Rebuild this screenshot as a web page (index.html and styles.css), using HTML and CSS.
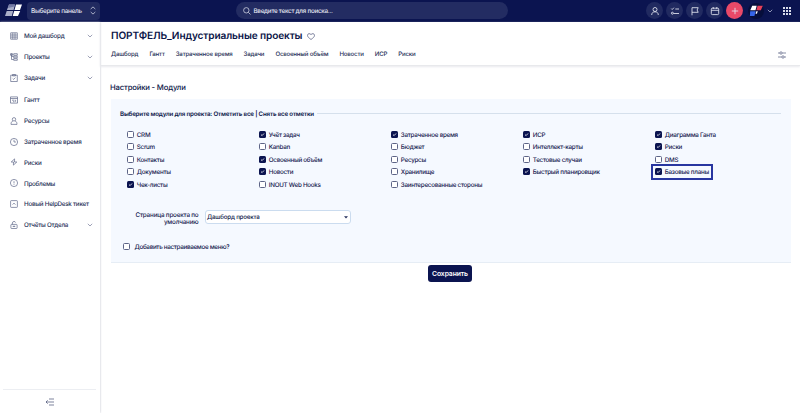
FILE: index.html
```
<!DOCTYPE html>
<html lang="ru">
<head>
<meta charset="utf-8">
<title>Настройки - Модули</title>
<link rel="stylesheet" href="styles.css">
</head>
<body>
<svg class="defs" width="0" height="0">
  <symbol id="chev" viewBox="0 0 6 4"><path d="M.8.8 3 3 5.200.8"/></symbol>
  <symbol id="tick" viewBox="0 0 7 7"><path d="M2 3.600 3.100 4.600 5 2.500"/></symbol>
</svg>
<header class="topbar">
  <svg class="logo" viewBox="0 0 18 13"><path fill="#a9aec9" d="M4 .5h6L8.600 6H1.900zM1.700 7h6.500l-1.400 5H0z"/><path fill="#fff" d="M11 .5h6L15 6H9.500zM9.200 7h6L13 12H7.700z"/><path fill="#747ba5" d="M4 .5h6L9.500 2.500 3 4z"/></svg>
  <div class="panel-pick"><span>Выберите панель</span><svg width="6" height="9" viewBox="0 0 6 9"><path d="M.7 3 3 .9 5.300 3M.7 6 3 8.100 5.300 6"/></svg></div>
  <div class="search"><svg width="8" height="8" viewBox="0 0 8 8"><circle cx="3.300" cy="3.300" r="2.700"/><path d="m5.300 5.300 2.200 2.200"/></svg><span>Введите текст для поиска...</span></div>
  <div class="actions">
    <a class="round"><svg viewBox="0 0 10 10"><circle cx="5" cy="3.500" r="2"/><path d="M1.700 9c0-2 1.200-3.200 3.300-3.200S8.300 7 8.300 9"/></svg></a>
    <a class="round"><svg viewBox="0 0 10 10"><path d="m1.300 2.600.9.9L3.900 1.700M5.300 3H9M3.500 7.500H9"/><circle cx="2.400" cy="7.200" r="1"/></svg></a>
    <a class="round"><svg viewBox="0 0 10 10"><path d="M2 9.300V1.700h6.200L7.100 4l1.100 2.300H2"/></svg></a>
    <a class="round"><svg viewBox="0 0 10 10"><rect x="1.300" y="2.200" width="7.400" height="6.400" rx="1"/><path d="M1.300 4.300h7.400M3.200 1v2M6.800 1v2"/></svg></a>
    <a class="round add"><svg viewBox="0 0 10 10"><path d="M5 1.800v6.400M1.800 5h6.400"/></svg></a>
  </div>
  <svg class="avatar" viewBox="0 0 16 16"><circle cx="8" cy="8" r="8" fill="#060e3b"/><path fill="#fff" d="M4.200 2.800h4.500L7.500 7.300H2.300z"/><path fill="#e5405a" d="M9.600 2.800h5.200L12.800 7.300H8.400z"/><path fill="#3564e8" d="M2.200 8.300h5.500L6.400 13H1.900z"/><path fill="#fff" d="M8.300 8.300h1.500l-.9 2.500H7.500z"/></svg>
  <svg class="chev light"><use href="#chev"/></svg>
  <svg class="apps" viewBox="0 0 8 8"><path d="M0 0h2v2H0zM3 0h2v2H3zM6 0h2v2H6zM0 3h2v2H0zM3 3h2v2H3zM6 3h2v2H6zM0 6h2v2H0zM3 6h2v2H3zM6 6h2v2H6z"/></svg>
</header>
<div class="body">
  <aside class="sidebar">
    <nav>
      <a><svg class="ico" viewBox="0 0 8 8"><path d="M.7.8h6.600v6.400H.7zM2.800.8v6.400M.7 3h6.600M.7 5.100h6.600M5 .8v6.400"/></svg><span>Мой дашборд</span><svg class="chev"><use href="#chev"/></svg></a>
      <a><svg class="ico" viewBox="0 0 8 8"><path d="M1.500.5v6h2M1.500 3.500h2M.5.7h2v1.600h-2zM3.700.7h3.600v1.600H3.700zM3.700 3.200h3.600v1.600H3.700zM3.700 5.700h3.600v1.600H3.700z"/></svg><span>Проекты</span><svg class="chev"><use href="#chev"/></svg></a>
      <a><svg class="ico" viewBox="0 0 8 8"><path d="M.7 1.200h6.600v6.300H.7zM2.500.5h3v1.400h-3zM2.700 4.500l1 .9L5.400 3.600"/></svg><span>Задачи</span><svg class="chev"><use href="#chev"/></svg></a>
      <a class="gap"><svg class="ico" viewBox="0 0 8 8"><path d="M.5.9h7v6.200h-7zM.5 2.500h7M2 4.200h2.500M3 5.700h1.500M5.600 3.800v2"/></svg><span>Гантт</span></a>
      <a><svg class="ico" viewBox="0 0 8 8"><circle cx="4" cy="2.300" r="1.700"/><path d="M2.900 3.900C1.500 4.500 1 5.600 1 7.400h6c0-1.800-.5-2.900-1.900-3.500"/></svg><span>Ресурсы</span></a>
      <a><svg class="ico" viewBox="0 0 8 8"><circle cx="4" cy="4" r="3.600"/><path d="M4 1.800V4h2"/></svg><span>Затраченное время</span></a>
      <a><svg class="ico" viewBox="0 0 8 8"><path d="M4.600.9 1.200 4h2.300l-.1 3.100L6.800 4H4.500z"/></svg><span>Риски</span></a>
      <a><svg class="ico" viewBox="0 0 8 8"><circle cx="4" cy="4" r="3.600"/><path d="M4 2.200v2.200M4 5.200v.7"/></svg><span>Проблемы</span></a>
      <a><svg class="ico" viewBox="0 0 8 8"><rect x=".6" y=".6" width="6.800" height="6.800" rx=".7"/><path d="m2.500 4.500 1.500-1.300 1.500 1.300"/></svg><span>Новый HelpDesk тикет</span></a>
      <a><svg class="ico" viewBox="0 0 8 8"><rect x=".9" y="3.400" width="6.200" height="4.100" rx=".6"/><path d="M2.400 3.400V2c0-2 3-2 3.200-.4M4 4.700v1.400M2.700 5.400h2.600"/></svg><span>Отчёты Отдела</span><svg class="chev"><use href="#chev"/></svg></a>
    </nav>
    <div class="collapse"><svg width="10" height="8" viewBox="0 0 10 8"><path d="M4 1h5M1 4h8M4 7h5M2.700 2.300 1 4l1.700 1.700"/></svg></div>
  </aside>
  <main>
    <div class="project">
      <h1><span>ПОРТФЕЛЬ_Индустриальные проекты</span><svg width="8" height="7" viewBox="0 0 8 7"><path d="M4 6.500C2 5 .5 3.900.5 2.300.5.500 2.900 0 4 1.600 5.100 0 7.500.500 7.500 2.300 7.500 3.900 6 5 4 6.500z"/></svg></h1>
      <div class="tabs"><a>Дашборд</a><a>Гантт</a><a>Затраченное время</a><a>Задачи</a><a>Освоенный объём</a><a>Новости</a><a>ИСР</a><a>Риски</a>
        <svg class="tune" width="8" height="8" viewBox="0 0 8 8"><path d="M0 2h1.700M4.300 2H8M0 6h3.700M6.300 6H8"/><circle cx="3" cy="2" r="1.200"/><circle cx="5" cy="6" r="1.200"/></svg></div>
    </div>
    <h2>Настройки - Модули</h2>
    <form class="card">
      <div class="legend"><span>Выберите модули для проекта: Отметить все | Снять все отметки</span></div>
      <div class="modules">
        <div class="col">
          <label><i class="cb"></i>CRM</label>
          <label><i class="cb"></i>Scrum</label>
          <label><i class="cb"></i>Контакты</label>
          <label><i class="cb"></i>Документы</label>
          <label><svg class="cb on"><use href="#tick"/></svg>Чек-листы</label>
        </div>
        <div class="col">
          <label><svg class="cb on"><use href="#tick"/></svg>Учёт задач</label>
          <label><i class="cb"></i>Kanban</label>
          <label><svg class="cb on"><use href="#tick"/></svg>Освоенный объём</label>
          <label><svg class="cb on"><use href="#tick"/></svg>Новости</label>
          <label><i class="cb"></i>INOUT Web Hooks</label>
        </div>
        <div class="col">
          <label><svg class="cb on"><use href="#tick"/></svg>Затраченное время</label>
          <label><i class="cb"></i>Бюджет</label>
          <label><i class="cb"></i>Ресурсы</label>
          <label><i class="cb"></i>Хранилище</label>
          <label><i class="cb"></i>Заинтересованные стороны</label>
        </div>
        <div class="col">
          <label><svg class="cb on"><use href="#tick"/></svg>ИСР</label>
          <label><i class="cb"></i>Интеллект-карты</label>
          <label><i class="cb"></i>Тестовые случаи</label>
          <label><svg class="cb on"><use href="#tick"/></svg>Быстрый планировщик</label>
        </div>
        <div class="col">
          <label><svg class="cb on"><use href="#tick"/></svg>Диаграмма Ганта</label>
          <label><svg class="cb on"><use href="#tick"/></svg>Риски</label>
          <label><i class="cb"></i>DMS</label>
          <label class="marked"><svg class="cb on"><use href="#tick"/></svg>Базовые планы</label>
        </div>
      </div>
      <div class="field"><div class="name">Страница проекта по умолчанию</div><div class="select"><span>Дашборд проекта</span><svg width="4" height="3" viewBox="0 0 4 3"><path d="M0 .3h4L2 2.600z"/></svg></div></div>
      <label class="custom"><i class="cb"></i>Добавить настраиваемое меню?</label>
    </form>
    <button class="save">Сохранить</button>
  </main>
</div>
</body>
</html>
```

FILE: styles.css
```
*, *::after { box-sizing: border-box; }
body { margin: 0; width: 800px; height: 413px; overflow: hidden; background: #fff; color: #15204f; font: 500 6.200px/8px Inter, "Liberation Sans", sans-serif; letter-spacing: -.18px; text-rendering: geometricPrecision; }
svg { fill: none; stroke: currentColor; stroke-width: .7; flex: none; display: block; }
.defs { position: absolute; }
h1, h2 { margin: 0; }
span, a, label { white-space: nowrap; }

.topbar { height: 22px; padding-bottom: 1px; background: #0b1450; display: flex; align-items: center; color: #e4e6f1; }
.logo { width: 18px; height: 13px; margin-left: 5px; stroke: none; }
.panel-pick { width: 73px; height: 18px; margin-left: 4px; padding: 0 4px; border-radius: 4px; background: #212a60; display: flex; align-items: center; justify-content: space-between; font-size: 6.400px; letter-spacing: -.3px; }
.search { width: 272px; height: 17px; margin-left: 136px; padding-left: 7px; border-radius: 9px; background: #232c62; display: flex; align-items: center; gap: 2.500px; font-size: 6.300px; letter-spacing: -.27px; }
.panel-pick span, .search span { padding-top: 1px; }
.actions { display: flex; gap: 3px; margin-left: 138px; }
.round { width: 17px; height: 17px; border-radius: 50%; background: #212a60; display: flex; align-items: center; justify-content: center; }
.round svg { width: 10px; height: 10px; stroke-width: .85; }
.add { background: #e94968; }
.avatar { width: 16px; height: 16px; margin-left: 5px; stroke: none; }
.chev { width: 6px; height: 4px; color: #747a98; }
.light { margin-left: 3px; color: #c9cde0; }
.apps { width: 8px; height: 8px; margin-left: 10px; fill: #d8dbea; stroke: none; }

.body { display: flex; height: 391px; }
.sidebar { width: 100px; display: flex; flex-direction: column; justify-content: space-between; box-shadow: 0 0 2px #b9bcc8; }
nav { padding: 3.600px 7px 0 10px; }
nav a { height: 20.800px; display: flex; align-items: center; font-size: 6.250px; letter-spacing: -.24px; color: #273158; }
nav span { padding-top: .8px; }
nav a.gap { margin-top: 1.700px; }
nav .ico { width: 8px; height: 8px; margin-right: 6px; color: #545c80; stroke-width: .65; }
nav .chev { margin-left: auto; }
.collapse { height: 24px; margin: 0 4px 0 3px; border-top: 1px solid #eceef2; display: flex; align-items: center; justify-content: center; color: #454d73; }

main { width: 700px; display: flex; flex-direction: column; }
.project { height: 44px; padding: 7px 14px 0 11px; border-bottom: 1px solid #e8e9ec; box-shadow: 0 1px 2px #e9eaee; }
h1 { display: flex; align-items: center; gap: 5px; font-size: 10.100px; line-height: 13px; font-weight: 600; letter-spacing: -.12px; color: #0b1548; }
h1 span { padding-top: 1px; }
h1 svg { color: #4a5278; }
.tabs { display: flex; align-items: center; gap: 11.100px; height: 8px; margin-top: 7.500px; font-size: 6.100px; letter-spacing: -.19px; color: #273158; }
.tabs a { padding-top: 1px; }
.tune { margin-left: auto; color: #545c80; }
h2 { margin: 17px 0 0 10px; font-size: 7.700px; line-height: 10px; font-weight: 550; letter-spacing: -.17px; color: #0b1548; }
.card { width: 680px; height: 164px; margin: 6px 0 0 10.500px; padding: 10px 10px 0 9.500px; background: #f5f9ff; border-bottom: 1px solid #e6edf5; }
.legend { display: flex; align-items: center; gap: 3px; font-size: 6.200px; font-weight: 600; line-height: 9px; color: #0b1548; }
.legend span { padding-top: 1px; margin-bottom: -1px; }
.legend::after { content: ""; flex: 1; height: 1px; background: #d5e0ec; }
.modules { display: grid; grid-template-columns: repeat(5, 132px); height: 62.500px; margin: 10px 0 0 6.500px; }
.modules label { height: 12.500px; padding-top: 1px; }
.modules label, .custom { display: flex; align-items: center; gap: 3.300px; font-size: 6.250px; letter-spacing: -.26px; font-weight: 450; }
.modules .cb { margin-top: -1px; }
.cb { display: block; flex: none; width: 7px; height: 7px; border: .8px solid #5d6587; border-radius: 1.500px; background: #fff; }
.cb.on { border: 0; background: #0b1450; color: #fff; stroke-width: .8; }
.marked { position: relative; }
.marked::after { content: ""; position: absolute; left: -3.500px; top: -1.500px; width: 62px; height: 16px; border: 2px solid #2836a0; }
.field { display: flex; align-items: flex-start; margin-top: 19.700px; }
.name { width: 78.500px; margin-top: 2.300px; text-align: right; line-height: 6.600px; font-size: 6.300px; letter-spacing: -.18px; font-weight: 450; }
.select { width: 146px; height: 14px; margin-left: 6.500px; padding: 0 2px 0 1px; border: 1px solid #cbdcef; border-radius: 3px; background: #fff; display: flex; align-items: center; justify-content: space-between; font-size: 6.200px; letter-spacing: -.2px; font-weight: 450; color: #111b4a; }
.select span { padding-top: 1.400px; }
.select svg { fill: #26305c; stroke: none; }
.custom { margin: 17px 0 0 3px; gap: 4.500px; letter-spacing: -.32px; font-size: 6.300px; }
.save { width: 44px; height: 17px; margin: 2px 0 0 328px; padding: 0; border: 0; border-radius: 3px; background: #0b1450; color: #fff; font: 600 6.800px/17px Inter, "Liberation Sans", sans-serif; letter-spacing: -.1px; }
```
